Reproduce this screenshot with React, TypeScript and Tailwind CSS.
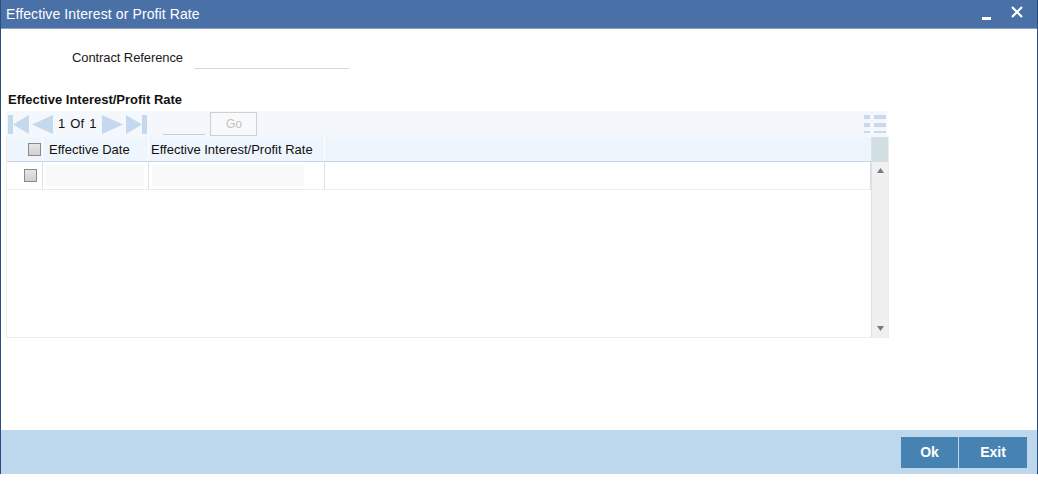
import React from "react";

const NavFirst = () => (
  <svg width="21" height="21" viewBox="0 0 21 21"><rect x="0" y="1" width="5" height="19" fill="#c5d9ee" /><polygon points="21,1 21,20 5,10.5" fill="#c5d9ee" /></svg>
);
const NavPrev = () => (
  <svg width="21" height="21" viewBox="0 0 21 21"><polygon points="21,1 21,20 0,10.5" fill="#c5d9ee" /></svg>
);
const NavNext = () => (
  <svg width="21" height="21" viewBox="0 0 21 21"><polygon points="0,1 0,20 21,10.5" fill="#c5d9ee" /></svg>
);
const NavLast = () => (
  <svg width="21" height="21" viewBox="0 0 21 21"><polygon points="0,1 0,20 16,10.5" fill="#c5d9ee" /><rect x="16" y="1" width="5" height="19" fill="#c5d9ee" /></svg>
);

const Check = () => (
  <div className="w-[13px] h-[13px] border border-[#8a8a8a] bg-gradient-to-b from-[#e6e6e6] to-[#d0d0d0]" />
);

export default function App() {
  return (
    <div className="w-[1038px] h-[483px] bg-white" style={{ fontFamily: '"Liberation Sans", Arial, sans-serif' }}>
      <div className="h-[474px] flex flex-col border-l border-r border-[#2b4d80]">
        <div className="h-[29px] bg-[#4a70a8] border-b border-[#8ea2b4] flex items-center justify-between pl-[5px] pr-[14px]">
          <span className="text-white text-[14px] tracking-[0.1px]">Effective Interest or Profit Rate</span>
          <div className="flex items-center gap-[20px]">
            <div className="w-[9px] h-[3px] bg-white mt-[8px]" />
            <svg width="12" height="12" viewBox="0 0 12 12" className="mb-[4px]"><path d="M1 1 L11 11 M11 1 L1 11" stroke="white" strokeWidth="2.2" /></svg>
          </div>
        </div>
        <div className="flex-1 flex flex-col">
          <div className="flex items-center h-[30px] mt-[14px]">
            <span className="ml-[71px] text-[13px] text-[#1a1a1a] tracking-[-0.1px]">Contract Reference</span>
            <div className="ml-[11px] w-[155px] h-[22px] border-b border-[#d6d6d6]" />
          </div>
          <div className="mt-[19px] ml-[7px] text-[13px] font-bold text-[#111] leading-[16px]">Effective Interest/Profit Rate</div>
          <div className="ml-[5px] w-[881px] mt-[3px]">
            <div className="h-[26px] bg-[#f4f8fc] flex items-center">
              <div className="ml-[2px] flex items-center gap-[3px]">
                <NavFirst />
                <NavPrev />
              </div>
              <span className="ml-[5px] text-[13px] text-[#111] [word-spacing:1.5px]">1 Of 1</span>
              <div className="ml-[6px] flex items-center gap-[3px]">
                <NavNext />
                <NavLast />
              </div>
              <div className="ml-[16px] w-[42px] h-[22px] border-b border-[#c8cdd3]" />
              <div className="ml-[5px] w-[47px] h-[24px] border border-[#cfcfcf] bg-[#f7f9fb] flex items-center justify-center text-[12px] text-[#c4c4c4]">Go</div>
              <div className="ml-auto mr-[1px] flex flex-col gap-[4px]">
                <div className="flex gap-[4px]"><div className="w-[6px] h-[4px] bg-[#c9d8ec]" /><div className="w-[12px] h-[4px] bg-[#c9d8ec]" /></div>
                <div className="flex gap-[4px]"><div className="w-[6px] h-[4px] bg-[#c9d8ec]" /><div className="w-[12px] h-[4px] bg-[#c9d8ec]" /></div>
                <div className="flex gap-[4px]"><div className="w-[6px] h-[2px] bg-[#c9d8ec]" /><div className="w-[12px] h-[2px] bg-[#c9d8ec]" /></div>
              </div>
            </div>
            <div className="flex w-[883px] h-[201px] border border-[#ececec] border-t-0">
              <div className="flex-1 flex flex-col">
                <div className="h-[25px] bg-[#eef5fd] border-b border-[#c8d6e2] flex text-[13px] text-[#111]">
                  <div className="w-[35px] flex items-center justify-end pr-[1px] pt-[1px]"><Check /></div>
                  <div className="w-[106px] border-l border-white flex items-center pl-[6px] pt-[1px]">Effective Date</div>
                  <div className="w-[177px] border-l border-white border-r flex items-center pl-[2px] pt-[1px]">Effective Interest/Profit Rate</div>
                </div>
                <div className="h-[28px] border-b border-[#f7e8e2] border-r border-r-[#d8dde3] flex">
                  <div className="w-[35px] flex items-center justify-end pr-[5px]"><Check /></div>
                  <div className="w-[106px] border-l border-[#dde2e7] p-[3px]"><div className="w-[98px] h-[21px] bg-[#f9f9f9]" /></div>
                  <div className="w-[177px] border-l border-r border-[#dde2e7] pl-[3px] py-[3px]"><div className="w-[152px] h-[21px] bg-[#f9f9f9]" /></div>
                </div>
              </div>
              <div className="w-[17px] flex flex-col border-l border-[#e0e0e0]">
                <div className="h-[25px] bg-[#d1dfe3]" />
                <div className="flex-1 bg-[#f0f0f0] flex flex-col items-center justify-between py-[6px]">
                  <svg width="7" height="5" viewBox="0 0 7 5"><polygon points="3.5,0 7,5 0,5" fill="#7a7a7a" /></svg>
                  <svg width="7" height="5" viewBox="0 0 7 5"><polygon points="0,0 7,0 3.5,5" fill="#7a7a7a" /></svg>
                </div>
              </div>
            </div>
          </div>
        </div>
        <div className="h-[44px] bg-[#bdd8ec] flex items-center justify-end pr-[10px]">
          <div className="flex gap-[1px]">
            <div className="w-[57px] h-[31px] bg-[#4683b2] text-white font-bold text-[14px] flex items-center justify-center">Ok</div>
            <div className="w-[68px] h-[31px] bg-[#4683b2] text-white font-bold text-[14px] flex items-center justify-center">Exit</div>
          </div>
        </div>
      </div>
    </div>
  );
}
